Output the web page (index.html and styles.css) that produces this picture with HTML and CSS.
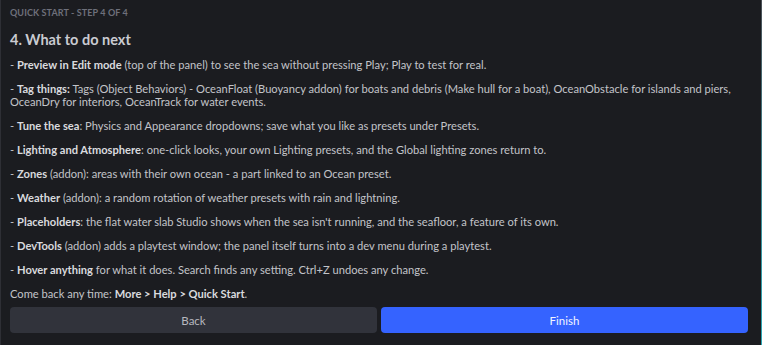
FILE: index.html
```
<!DOCTYPE html>
<html>
<head>
<meta charset="utf-8">
<link rel="stylesheet" href="styles.css">
</head>
<body>
<div class="panel">
  <div class="content">
    <div class="step">Quick Start - Step 4 of 4</div>
    <h1 class="title">4. What to do next</h1>
    <p class="item">- <b>Preview in Edit mode</b> (top of the panel) to see the sea without pressing Play; Play to test for real.</p>
    <p class="item">- <b>Tag things:</b> Tags (Object Behaviors) - OceanFloat (Buoyancy addon) for boats and debris (Make hull for a boat), OceanObstacle for islands and piers,<br>OceanDry for interiors, OceanTrack for water events.</p>
    <p class="item">- <b>Tune the sea</b>: Physics and Appearance dropdowns; save what you like as presets under Presets.</p>
    <p class="item">- <b>Lighting and Atmosphere</b>: one-click looks, your own Lighting presets, and the Global lighting zones return to.</p>
    <p class="item">- <b>Zones</b> (addon): areas with their own ocean - a part linked to an Ocean preset.</p>
    <p class="item">- <b>Weather</b> (addon): a random rotation of weather presets with rain and lightning.</p>
    <p class="item">- <b>Placeholders</b>: the flat water slab Studio shows when the sea isn't running, and the seafloor, a feature of its own.</p>
    <p class="item">- <b>DevTools</b> (addon) adds a playtest window; the panel itself turns into a dev menu during a playtest.</p>
    <p class="item">- <b>Hover anything</b> for what it does. Search finds any setting. Ctrl+Z undoes any change.</p>
    <p class="item">Come back any time: <b>More &gt; Help &gt; Quick Start</b>.</p>
    <div class="actions">
      <button class="btn btn-back">Back</button>
      <button class="btn btn-finish">Finish</button>
    </div>
  </div>
  <div class="scroll"></div>
</div>
</body>
</html>
```
FILE: styles.css
```
html, body {
  margin: 0;
  padding: 0;
  background: #1b1c20;
}
body {
  width: 762px;
  height: 345px;
  overflow: hidden;
}
.panel {
  display: flex;
  height: 345px;
  border-left: 1px solid #2e2f35;
  box-sizing: border-box;
  font-family: Lato, "Liberation Sans", sans-serif;
  color: #c3c4c9;
}
.content {
  flex: 1;
  padding: 7px 13px 0 9px;
  display: flex;
  flex-direction: column;
}
.scroll {
  width: 1px;
  background: linear-gradient(#4a5056, #3f8f9a 60%, #2aa7b4);
}
.step {
  font-size: 9px;
  font-weight: 700;
  letter-spacing: 0.1px;
  text-transform: uppercase;
  color: #6e707b;
  line-height: 12px;
}
.title {
  margin: 13px 0 0;
  font-size: 14.5px;
  font-weight: 700;
  color: #cacbd1;
  line-height: 16px;
}
.item {
  margin: 0;
  font-size: 11.15px;
  line-height: 13.4px;
}
.title + .item {
  margin-top: 9.8px;
}
.item + .item {
  margin-top: 10.6px;
}
.item b {
  font-weight: 700;
  color: #d9dade;
}
.actions {
  display: grid;
  grid-template-columns: 1fr 1fr;
  gap: 4px;
  margin-top: 6.6px;
}
.btn {
  height: 26px;
  border: 0;
  border-radius: 4px;
  font-family: Lato, "Liberation Sans", sans-serif;
  font-size: 11.5px;
  padding: 0;
}
.btn-back {
  background: #31333b;
  color: #b7b8bf;
}
.btn-finish {
  background: #3563ff;
  color: #f2f4ff;
}
```
